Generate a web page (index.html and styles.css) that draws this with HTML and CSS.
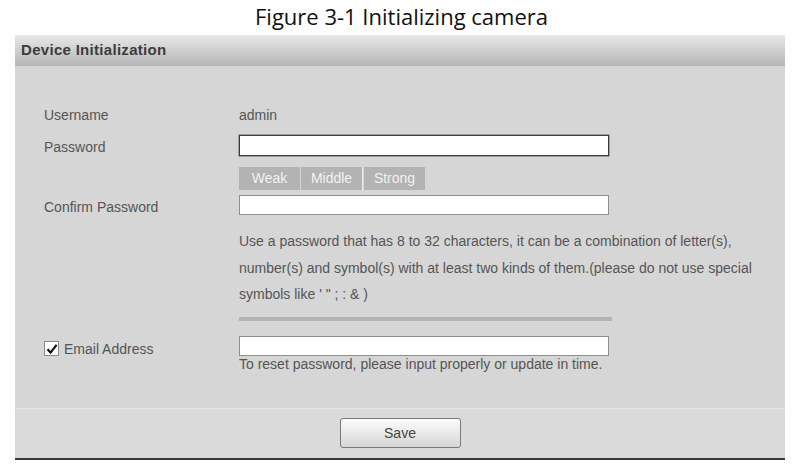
FILE: index.html
```html
<!DOCTYPE html>
<html lang="en">
  <head>
    <meta charset="UTF-8" />
    <meta name="viewport" content="width=device-width, initial-scale=1.0" />
    <title>Device Initialization</title>

    <!-- CSS -->
    <link rel="stylesheet" href="styles.css">
  </head>
  <body>
    <p class="caption">Figure 3-1 Initializing camera</p>
    <div class="panel">
      <div class="panel-head">Device Initialization</div>
      <div class="panel-body">
        <div class="row row-user">
          <span class="label">Username</span>
          <span class="value">admin</span>
        </div>
        <div class="row row-pwd">
          <span class="label">Password</span>
          <input type="password" class="field field-active" />
        </div>
        <div class="row row-strength">
          <span class="label"></span>
          <div class="strength">
            <span class="level">Weak</span>
            <span class="level">Middle</span>
            <span class="level">Strong</span>
          </div>
        </div>
        <div class="row row-confirm">
          <span class="label">Confirm Password</span>
          <input type="password" class="field" />
        </div>
        <div class="row row-note">
          <span class="label"></span>
          <p class="note">
            Use a password that has 8 to 32 characters, it can be a combination of letter(s),
            number(s) and symbol(s) with at least two kinds of them.(please do not use special
            symbols like ' " ; : &amp; )
          </p>
        </div>
        <div class="row row-divider">
          <span class="label"></span>
          <div class="divider"></div>
        </div>
        <div class="row row-email">
          <label class="label check-label">
            <span class="checkbox">
              <svg width="12" height="12" viewBox="0 0 12 12">
                <path d="M1.5 6.2 L4.6 9.6 L10.6 1.8" fill="none" stroke="#111" stroke-width="2.2" />
              </svg>
            </span>
            Email Address
          </label>
          <div class="email-box">
            <input type="text" class="field" />
            <p class="hint">To reset password, please input properly or update in time.</p>
          </div>
        </div>
      </div>
      <div class="panel-foot">
        <button class="save">Save</button>
      </div>
    </div>
  </body>
</html>
```

FILE: styles.css
```css
html {
  font-family: "Liberation Sans", Arial, sans-serif;
}

body {
  margin: 0;
  width: 803px;
  background-color: #fff;
}

.caption {
  margin: 0;
  height: 35px;
  line-height: 33px;
  text-align: center;
  font-family: "Open Sans", sans-serif;
  font-size: 22px;
  color: #111;
}

.panel {
  margin-left: 15px;
  width: 770px;
  background-color: #d6d6d6;
}

.panel-head {
  height: 31px;
  line-height: 30px;
  padding-left: 6px;
  font-size: 15px;
  font-weight: bold;
  letter-spacing: 0.3px;
  color: #3c3c3c;
  background: linear-gradient(#e8e8e8, #b6b6b6);
}

.panel-body {
  box-sizing: border-box;
  height: 342px;
  padding: 39px 0 0 29px;
  font-size: 14px;
  color: #555;
}

.row {
  display: grid;
  grid-template-columns: 195px 1fr;
  align-items: center;
}

.label {
  color: #555;
}

.row-user {
  height: 20px;
}

.row-pwd {
  margin-top: 10px;
}

.row-pwd .label {
  padding-top: 2px;
}

.row-strength {
  margin-top: 11px;
}

.row-confirm {
  margin-top: 5px;
}

.row-confirm .label {
  padding-top: 3px;
}

.row-note {
  margin-top: 13px;
}

.row-divider {
  margin-top: 9px;
}

.row-email {
  margin-top: 15px;
  align-items: start;
}

.field {
  box-sizing: border-box;
  width: 370px;
  height: 20px;
  margin: 0;
  padding: 0 4px;
  border: 1px solid #8e8e8e;
  background-color: #fff;
  outline: none;
}

.field-active {
  height: 21px;
  border-color: #3a3a3a;
  box-shadow: 0 0 0 0.5px #666;
}

.strength {
  display: flex;
  gap: 1px;
}

.level {
  width: 61px;
  height: 23px;
  line-height: 23px;
  text-align: center;
  background-color: #b3b3b3;
  color: #f2f2f2;
}

.level:nth-child(2) {
  border-right: 1px solid #eee;
}

.note {
  margin: 0;
  line-height: 26.5px;
  color: #555;
}

.divider {
  width: 373px;
  height: 4px;
  background-color: #b4b4b4;
}

.check-label {
  display: flex;
  align-items: center;
  gap: 5px;
  margin-top: 5px;
}

.checkbox {
  box-sizing: border-box;
  width: 15px;
  height: 15px;
  border: 1px solid #8a8a8a;
  background-color: #fff;
  display: flex;
  align-items: center;
  justify-content: center;
}

.hint {
  margin: 0;
  line-height: 16px;
  color: #555;
}

.panel-foot {
  box-sizing: border-box;
  height: 52px;
  padding-top: 9px;
  border-top: 1px solid #e4e4e4;
  border-bottom: 2px solid #3a3a3a;
  background-color: #dadada;
  display: flex;
  justify-content: center;
}

.save {
  width: 121px;
  height: 30px;
  border: 1px solid #7a7a7a;
  border-radius: 3px;
  background: linear-gradient(#fcfcfc, #d6d6d6);
  font-family: "Liberation Sans", Arial, sans-serif;
  font-size: 14px;
  color: #444;
}
```
